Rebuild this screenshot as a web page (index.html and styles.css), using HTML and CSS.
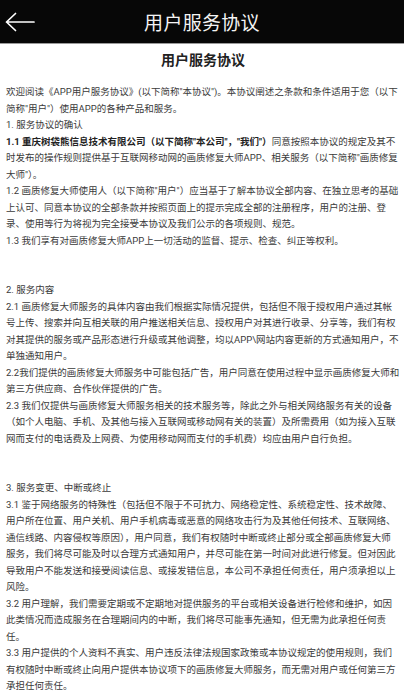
FILE: index.html
```html
<!DOCTYPE html>
<html lang="zh-CN">
<head>
<meta charset="utf-8">
<title>用户服务协议</title>
<link rel="stylesheet" href="styles.css">
</head>
<body>
<header class="topbar">
  <svg class="back" width="30" height="20" viewBox="0 0 30 20" aria-hidden="true">
    <path d="M1.5 10 H29 M10.5 1.5 L1.5 10 L10.5 18.5" fill="none" stroke="#fff" stroke-width="1.7" stroke-linecap="round" stroke-linejoin="round"/>
  </svg>
  <h1 class="topbar-title">用户服务协议</h1>
</header>
<main class="doc">
  <h2 class="doc-title">用户服务协议</h2>
  <div class="doc-body">
    <p>欢迎阅读《APP用户服务协议》(以下简称"本协议")。本协议阐述之条款和条件适用于您（以下简称"用户"）使用APP的各种产品和服务。</p>
    <p>1. 服务协议的确认</p>
    <p><b>1.1 重庆树袋熊信息技术有限公司（以下简称"本公司"，"我们"）</b>同意按照本协议的规定及其不时发布的操作规则提供基于互联网移动网的画质修复大师APP、相关服务（以下简称"画质修复大师"）。</p>
    <p>1.2 画质修复大师使用人（以下简称"用户"）应当基于了解本协议全部内容、在独立思考的基础上认可、同意本协议的全部条款并按照页面上的提示完成全部的注册程序，用户的注册、登录、使用等行为将视为完全接受本协议及我们公示的各项规则、规范。</p>
    <p>1.3 我们享有对画质修复大师APP上一切活动的监督、提示、检查、纠正等权利。</p>
    <p class="gap">2. 服务内容</p>
    <p>2.1 画质修复大师服务的具体内容由我们根据实际情况提供，包括但不限于授权用户通过其帐号上传、搜索并向互相关联的用户推送相关信息、授权用户对其进行收录、分享等，我们有权对其提供的服务或产品形态进行升级或其他调整，均以APP\网站内容更新的方式通知用户，不单独通知用户。</p>
    <p>2.2我们提供的画质修复大师服务中可能包括广告，用户同意在使用过程中显示画质修复大师和第三方供应商、合作伙伴提供的广告。</p>
    <p>2.3 我们仅提供与画质修复大师服务相关的技术服务等，除此之外与相关网络服务有关的设备（如个人电脑、手机、及其他与接入互联网或移动网有关的装置）及所需费用（如为接入互联网而支付的电话费及上网费、为使用移动网而支付的手机费）均应由用户自行负担。</p>
    <p class="gap">3. 服务变更、中断或终止</p>
    <p>3.1 鉴于网络服务的特殊性（包括但不限于不可抗力、网络稳定性、系统稳定性、技术故障、用户所在位置、用户关机、用户手机病毒或恶意的网络攻击行为及其他任何技术、互联网络、通信线路、内容侵权等原因），用户同意，我们有权随时中断或终止部分或全部画质修复大师服务，我们将尽可能及时以合理方式通知用户，并尽可能在第一时间对此进行修复。但对因此导致用户不能发送和接受阅读信息、或接发错信息，本公司不承担任何责任，用户须承担以上风险。</p>
    <p>3.2 用户理解，我们需要定期或不定期地对提供服务的平台或相关设备进行检修和维护，如因此类情况而造成服务在合理期间内的中断，我们将尽可能事先通知，但无需为此承担任何责任。</p>
    <p>3.3 用户提供的个人资料不真实、用户违反法律法规国家政策或本协议规定的使用规则，我们有权随时中断或终止向用户提供本协议项下的画质修复大师服务，而无需对用户或任何第三方承担任何责任。</p>
  </div>
</main>
</body>
</html>
```
FILE: styles.css
```css
* { box-sizing: border-box; }
html, body {
  margin: 0;
  padding: 0;
  background: #fff;
  font-family: Roboto, "Noto Sans CJK SC", "Noto Sans", sans-serif;
}
.topbar {
  height: 44px;
  background: #070707;
  border-bottom: 1.5px solid #9a9a9a;
  display: flex;
  align-items: center;
  justify-content: center;
  position: relative;
}
.back {
  position: absolute;
  left: 5px;
  top: 12px;
}
.topbar-title {
  margin: 0;
  color: #f4f4f4;
  font-size: 19px;
  font-weight: 400;
  letter-spacing: 0.3px;
}
.doc {
  padding: 0 4px 0 6px;
}
.doc-title {
  margin: 0;
  padding-top: 6px;
  height: 40px;
  text-align: center;
  font-size: 14px;
  font-weight: 700;
  color: #222;
  line-height: 20px;
}
.doc-body {
  font-size: 9.5px;
  line-height: 16.5px;
  color: #3a3a3a;
}
.doc-body p {
  margin: 0;
}
.doc-body b {
  color: #222;
}
.doc-body .gap {
  margin-top: 33px;
}
```
